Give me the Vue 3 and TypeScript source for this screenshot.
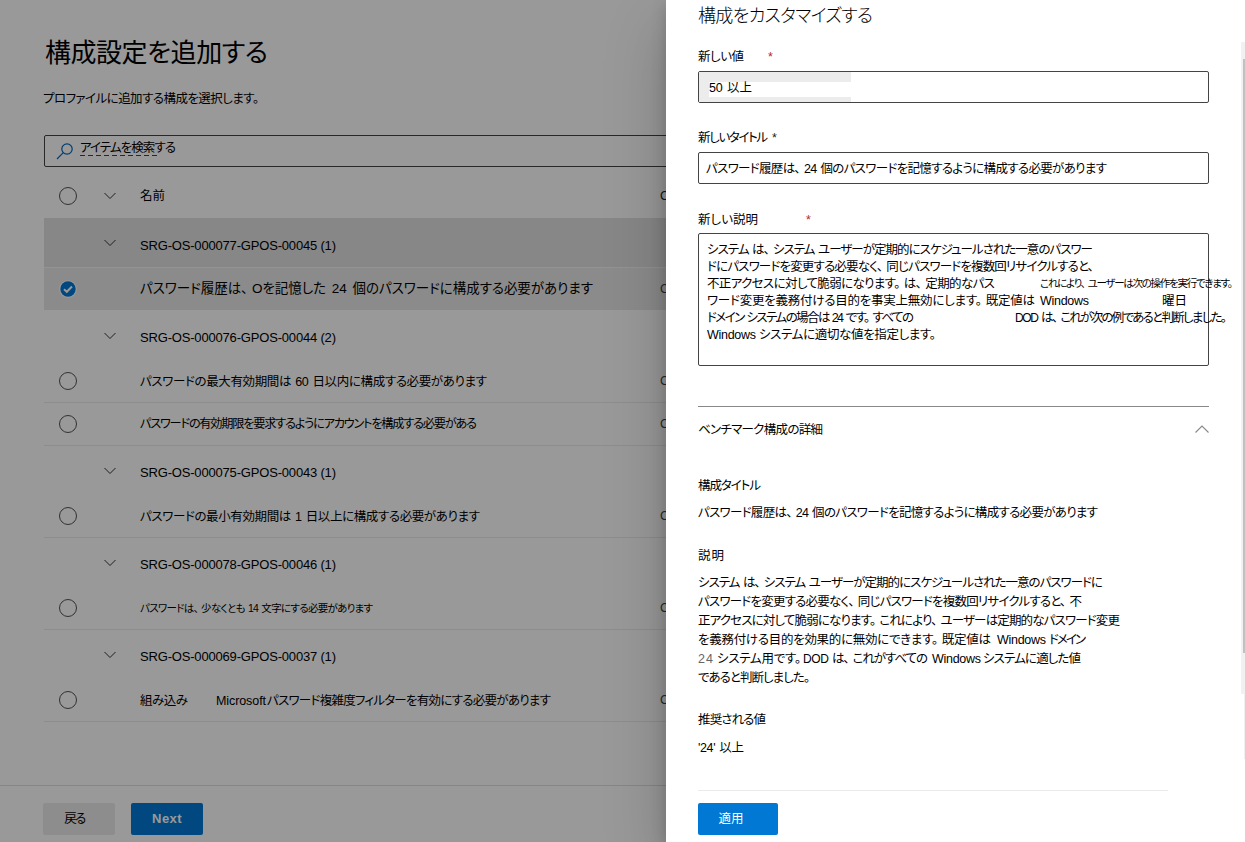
<script setup lang="ts">
import { defineComponent, h, onMounted, ref } from 'vue'

interface Run {
  text: string
  width: number
  gap?: number
  kind?: string
}
interface Item {
  runs: Run[]
  checked?: boolean
  height: number
}
interface Group {
  name: string
  height: number
  selected?: boolean
  items: Item[]
}

// A run of text whose characters are spread evenly over the given width.
// Punctuation inside the run keeps some air after it.
const Fit = defineComponent({
  props: {
    text: { type: String, required: true },
    width: { type: Number, required: true },
  },
  setup(props) {
    const root = ref<HTMLElement | null>(null)
    onMounted(() => {
      const el = root.value
      if (!el) return
      const natural = el.getBoundingClientRect().width
      const count = Math.max(1, Array.from(props.text).length - 1)
      el.style.letterSpacing = `${(props.width - natural) / count}px`
      el.style.width = `${props.width}px`
    })
    return () =>
      h(
        'span',
        { ref: root, class: 'run' },
        props.text
          .split(/([、。](?=.))/)
          .filter((part) => part !== '')
          .map((part, i, all) =>
            i < all.length - 1 && (part === '、' || part === '。') ? h('span', { class: 'stop' }, part) : part,
          ),
      )
  },
})

const groups: Group[] = [
  {
    name: 'SRG-OS-000077-GPOS-00045 (1)',
    height: 50,
    selected: true,
    items: [
      {
        checked: true,
        height: 42,
        runs: [{ text: 'パスワード履歴は、Oを記憶した 24 個のパスワードに構成する必要があります', width: 453, kind: 'wide' }],
      },
    ],
  },
  {
    name: 'SRG-OS-000076-GPOS-00044 (2)',
    height: 50,
    items: [
      { height: 43, runs: [{ text: 'パスワードの最大有効期間は 60 日以内に構成する必要があります', width: 347 }] },
      {
        height: 43,
        runs: [{ text: 'パスワードの有効期限を要求するようにアカウントを構成する必要がある', width: 337, kind: 'tight' }],
      },
    ],
  },
  {
    name: 'SRG-OS-000075-GPOS-00043 (1)',
    height: 49,
    items: [{ height: 43, runs: [{ text: 'パスワードの最小有効期間は 1 日以上に構成する必要があります', width: 340 }] }],
  },
  {
    name: 'SRG-OS-000078-GPOS-00046 (1)',
    height: 49,
    items: [{ height: 43, runs: [{ text: 'パスワードは、少なくとも 14 文字にする必要があります', width: 233, kind: 'small' }] }],
  },
  {
    name: 'SRG-OS-000069-GPOS-00037 (1)',
    height: 49,
    items: [
      {
        height: 43,
        runs: [
          { text: '組み込み', width: 48 },
          { text: 'Microsoft', width: 50, gap: 28 },
          { text: 'パスワード複雑度フィルターを有効にする必要があります', width: 284, gap: 1 },
        ],
      },
    ],
  },
]

const newDescription: Run[][] = [
  [{ text: 'システム は、システム ユーザーが定期的にスケジュールされた一意のパスワー', width: 386 }],
  [{ text: 'ドにパスワードを変更する必要なく、同じパスワードを複数回リサイクルすると、', width: 387 }],
  [
    { text: '不正アクセスに対して脆弱になります。は、定期的なパス', width: 288 },
    { text: 'これにより、ユーザーは次の操作を実行できます。', width: 193, gap: 45, kind: 'small' },
  ],
  [
    { text: 'ワード変更を義務付ける目的を事実上無効にします。既定値は', width: 328 },
    { text: 'Windows', width: 49, gap: 5 },
    { text: '曜日', width: 25, gap: 73 },
  ],
  [
    { text: 'ドメイン システムの場合は 24 です。すべての', width: 207 },
    { text: 'DOD', width: 24, gap: 101, kind: 'narrow' },
    { text: 'は、これが次の例であると判断しました。', width: 186, gap: 2 },
  ],
  [
    { text: 'Windows', width: 49 },
    { text: 'システムに適切な値を指定します。', width: 177, gap: 3 },
  ],
]

const description: Run[][] = [
  [{ text: 'システム は、システム ユーザーが定期的にスケジュールされた一意のパスワードに', width: 405 }],
  [{ text: 'パスワードを変更する必要なく、同じパスワードを複数回リサイクルすると、不', width: 384 }],
  [{ text: '正アクセスに対して脆弱になります。これにより、ユーザーは定期的なパスワード変更', width: 422 }],
  [
    { text: 'を義務付ける目的を効果的に無効にできます。既定値は', width: 293 },
    { text: 'Windows', width: 49, gap: 6 },
    { text: 'ドメイン', width: 37, gap: 3 },
  ],
  [
    { text: '24', width: 15, kind: 'faint' },
    { text: 'システム用です。', width: 84, gap: 4 },
    { text: 'DOD', width: 26, gap: 2, kind: 'narrow' },
    { text: 'は、これがすべての', width: 96, gap: 3 },
    { text: 'Windows', width: 49, gap: 4 },
    { text: 'システムに適した値', width: 98, gap: 2 },
  ],
  [{ text: 'であると判断しました。', width: 112 }],
]
</script>

<template>
  <div class="screen">
    <main class="page">
      <h1><Fit :width="223" text="構成設定を追加する" /></h1>
      <p class="lead"><Fit :width="216" text="プロファイルに追加する構成を選択します。" /></p>

      <div class="search">
        <svg class="glass" width="18" height="18" viewBox="0 0 18 18">
          <circle cx="11" cy="7" r="5.2" />
          <path d="M7.3 10.7 1 17" />
        </svg>
        <span class="hint"><Fit :width="96" text="アイテムを検索する" /></span>
      </div>

      <div class="row header">
        <span class="pick"><i class="ring"></i></span>
        <span class="fold"><svg width="12" height="8" viewBox="0 0 12 8"><path d="M.5 1 6 6.5 11.5 1" /></svg></span>
        <span class="name"><Fit :width="25" text="名前" /></span>
        <span class="col">C</span>
      </div>

      <section v-for="g in groups" :key="g.name" :class="{ selected: g.selected }">
        <div class="row group" :style="{ height: g.height + 'px' }">
          <span class="pick"></span>
          <span class="fold"><svg width="12" height="8" viewBox="0 0 12 8"><path d="M.5 1 6 6.5 11.5 1" /></svg></span>
          <span class="name" :class="{ low: g.height === 50 }"><Fit class="srg" :width="196" :text="g.name" /></span>
        </div>
        <div v-for="(item, i) in g.items" :key="i" class="row item" :style="{ height: item.height + 'px' }">
          <span class="pick">
            <svg v-if="item.checked" width="18" height="18" viewBox="0 0 18 18">
              <circle class="disc-edge" cx="9" cy="9" r="8.8" />
              <circle class="disc" cx="9" cy="9" r="7.7" />
              <path class="tick" d="M5 9.2 7.8 11.8 13 6.5" />
            </svg>
            <i v-else class="ring"></i>
          </span>
          <span class="fold"></span>
          <span class="name">
            <Fit
              v-for="r in item.runs"
              :key="r.text"
              :width="r.width"
              :text="r.text"
              :class="r.kind"
              :style="{ marginLeft: (r.gap ?? 0) + 'px' }"
            />
          </span>
          <span class="col">C</span>
        </div>
      </section>

      <footer>
        <button class="back"><Fit :width="22" text="戻る" /></button>
        <button class="next">Next</button>
      </footer>
    </main>
    <div class="dim"></div>

    <aside class="panel">
      <h2><Fit :width="175" text="構成をカスタマイズする" /></h2>

      <div class="label first"><Fit :width="46" text="新しい値" /><b class="far">*</b></div>
      <div class="field value">
        <span class="shade"><span class="clear"><Fit :width="43" text="50 以上" /></span></span>
      </div>

      <div class="label second"><Fit :width="70" text="新しいタイトル" /><b class="dark">*</b></div>
      <div class="field filled">
        <Fit class="inset" :width="401" text="パスワード履歴は、24 個のパスワードを記憶するように構成する必要があります" />
      </div>

      <div class="label third"><Fit :width="60" text="新しい説明" /><b class="farther">*</b></div>
      <div class="area">
        <div v-for="(line, i) in newDescription" :key="i" class="line">
          <Fit
            v-for="r in line"
            :key="r.text"
            :width="r.width"
            :text="r.text"
            :class="r.kind"
            :style="{ marginLeft: (r.gap ?? 0) + 'px' }"
          />
        </div>
      </div>

      <div class="details-head">
        <Fit :width="125" text="ベンチマーク構成の詳細" />
        <svg width="14" height="8" viewBox="0 0 14 8"><path d="M.5 7.5 7 1l6.5 6.5" /></svg>
      </div>

      <div class="label conf"><Fit :width="63" text="構成タイトル" /></div>
      <div class="text">
        <Fit :width="400" text="パスワード履歴は、24 個のパスワードを記憶するように構成する必要があります" />
      </div>

      <div class="label desc"><Fit :width="26" text="説明" /></div>
      <div class="description">
        <div v-for="(line, i) in description" :key="i" class="line">
          <Fit
            v-for="r in line"
            :key="r.text"
            :width="r.width"
            :text="r.text"
            :class="r.kind"
            :style="{ marginLeft: (r.gap ?? 0) + 'px' }"
          />
        </div>
      </div>

      <div class="label rec"><Fit :width="68" text="推奨される値" /></div>
      <div class="text rec-value"><Fit :width="46" text="'24' 以上" /></div>

      <div class="rule"></div>
      <button class="apply"><Fit :width="25" text="適用" /></button>

      <div class="track"><div class="thumb"></div></div>
      <div class="tail"></div>
    </aside>
  </div>
</template>

<style>
html,
body {
  margin: 0;
  overflow: hidden;
}
</style>

<style scoped>
.screen {
  position: relative;
  width: 1245px;
  height: 842px;
  overflow: hidden;
  background: #fff;
  color: #000;
  font-family: 'Liberation Sans', 'Noto Sans CJK JP', sans-serif;
  font-size: 12.5px;
  line-height: 20px;
}
.screen * {
  box-sizing: border-box;
}
.run {
  display: inline-block;
  flex: none;
  white-space: pre;
  font-feature-settings: 'palt';
  word-spacing: 1px;
}
.run :deep(.stop) {
  margin-right: 4px;
}
.wide {
  font-size: 13.5px;
  word-spacing: 2px;
}
.tight {
  font-size: 12.2px;
  margin-top: -2px;
}
.small {
  font-size: 10.5px;
  margin-top: -1px;
}
.small :deep(.stop) {
  margin-right: 3px;
}
.narrow {
  font-size: 12px;
}
.srg {
  font-size: 13px;
  word-spacing: 0;
}
.faint {
  color: #666;
}
h1,
h2,
p {
  margin: 0;
  font-weight: 400;
}
button {
  border: 0;
  padding: 0;
  border-radius: 2px;
  font: inherit;
  height: 32px;
}

.page {
  width: 720px;
  height: 842px;
  display: flex;
  flex-direction: column;
}
h1 {
  margin: 34px 0 0 45px;
  height: 38px;
  font-size: 26px;
  line-height: 39px;
}
.lead {
  margin: 17px 0 0 43px;
  height: 19px;
}
.search {
  margin: 27px 0 0 44px;
  height: 32px;
  border: 1px solid #444;
  border-radius: 2px;
  display: flex;
}
.glass {
  margin: 6px 0 0 11px;
  fill: none;
  stroke: #0067b8;
  stroke-width: 1.2;
}
.hint {
  margin: 2px 0 0 6px;
  height: 18px;
  background: repeating-linear-gradient(90deg, #444 0 5px, transparent 5px 8px) left bottom / 78px 1px no-repeat;
}
.row {
  margin-left: 44px;
  display: flex;
  align-items: center;
}
.header {
  height: 51px;
  padding-top: 7px;
}
.pick {
  width: 48px;
  height: 18px;
  padding-left: 15px;
  flex: none;
}
.pick svg,
.ring {
  display: block;
}
.ring {
  width: 18px;
  height: 18px;
  border: 1px solid #55534f;
  border-radius: 50%;
}
.disc-edge {
  fill: #fff;
}
.disc {
  fill: #0078d4;
}
.tick {
  fill: none;
  stroke: #fff;
  stroke-width: 2;
}
.fold {
  width: 48px;
  padding-left: 12px;
  flex: none;
  display: flex;
}
.fold svg {
  fill: none;
  stroke: #333;
  stroke-width: 1;
}
.name {
  width: 520px;
  flex: none;
  display: flex;
}
.low {
  padding-top: 2px;
}
.col {
  color: #444;
}
.header .col {
  color: #222;
}
.group {
  padding-top: 4px;
}
.group .fold {
  padding-bottom: 3px;
}
.item {
  border-bottom: 1px solid #edebe9;
}
.item .name {
  padding-top: 1px;
}
.selected .group {
  background: #e1e1e1;
  border-bottom: 1px solid #f6f6f6;
}
.selected .item {
  background: #e8e8e8;
  border-bottom: 0;
}
.selected .item .name {
  padding: 0 0 1px;
}
footer {
  margin-top: 63px;
  height: 57px;
  border-top: 1px solid #e1dfdd;
  padding: 17px 0 0 43px;
  display: flex;
  gap: 16px;
}
footer button {
  width: 72px;
}
.back {
  background: #ebebeb;
  padding-right: 9px;
  color: #000;
}
.next {
  background: #0078d4;
  color: #fff;
  font-size: 13px;
  font-weight: 700;
  letter-spacing: 0.4px;
}
.dim {
  position: absolute;
  inset: 0;
  background: rgba(0, 0, 0, 0.4);
}

.panel {
  position: absolute;
  left: 666px;
  top: 0;
  width: 579px;
  height: 842px;
  background: #fff;
  padding-left: 32px;
  display: flex;
  flex-direction: column;
  box-shadow: 0 25.6px 57.6px rgba(0, 0, 0, 0.22), 0 4.8px 14.4px rgba(0, 0, 0, 0.18);
}
h2 {
  margin-top: 1px;
  height: 30px;
  font-size: 18px;
  line-height: 30px;
  font-weight: 300;
}
.label,
.text {
  height: 20px;
  padding-top: 1px;
  display: flex;
}
.label b {
  font-weight: 400;
  color: #b4282d;
}
.label .far {
  margin-left: 24px;
}
.label .farther {
  margin-left: 48px;
}
.label .dark {
  margin-left: 4px;
  color: #222;
}
.first {
  margin: 15px 0 5px;
}
.second {
  margin: 24px 0 5px;
}
.third {
  margin: 25px 0 4px;
}
.field {
  width: 511px;
  height: 32px;
  flex: none;
  border: 1px solid #444;
  border-radius: 2px;
  display: flex;
  align-items: center;
}
.filled {
  padding-top: 2px;
}
.inset {
  margin-left: 7px;
}
.shade {
  width: 152px;
  height: 30px;
  padding: 10px 0 5px 10px;
  background: #ececec;
}
.clear {
  display: block;
  height: 15px;
  line-height: 13px;
  background: #fff;
}
.area {
  width: 511px;
  height: 133px;
  flex: none;
  border: 1px solid #444;
  border-radius: 2px;
  padding: 7.5px 0 0 8px;
}
.line {
  display: flex;
}
.area .line {
  height: 17.2px;
  line-height: 17.2px;
}
.description {
  margin: 9px 0 -1px;
}
.description .line {
  height: 19px;
  line-height: 19px;
}
.details-head {
  width: 511px;
  margin-top: 40px;
  padding-top: 13px;
  height: 33px;
  border-top: 1px solid #888;
  display: flex;
  justify-content: space-between;
}
.details-head svg {
  margin-top: 5px;
  fill: none;
  stroke: #888;
  stroke-width: 1.1;
}
.conf {
  margin: 36px 0 7px;
}
.desc {
  margin-top: 23px;
}
.rec {
  margin: 22px 0 8px;
}
.rule {
  margin-top: 33px;
  width: 470px;
  height: 1px;
  background: #eaeaea;
}
.apply {
  margin-top: 12px;
  width: 80px;
  padding-right: 14px;
  background: #0078d4;
  color: #fff;
}
.track {
  position: absolute;
  right: 0;
  top: 42px;
  width: 4px;
  height: 652px;
  padding: 17px 0 0 2px;
  background: #f1f1f1;
}
.thumb {
  width: 2px;
  height: 594px;
  background: #c1c1c1;
}
.tail {
  position: absolute;
  right: 0;
  top: 694px;
  width: 1px;
  height: 65px;
  background: #f0f0f0;
}
</style>
